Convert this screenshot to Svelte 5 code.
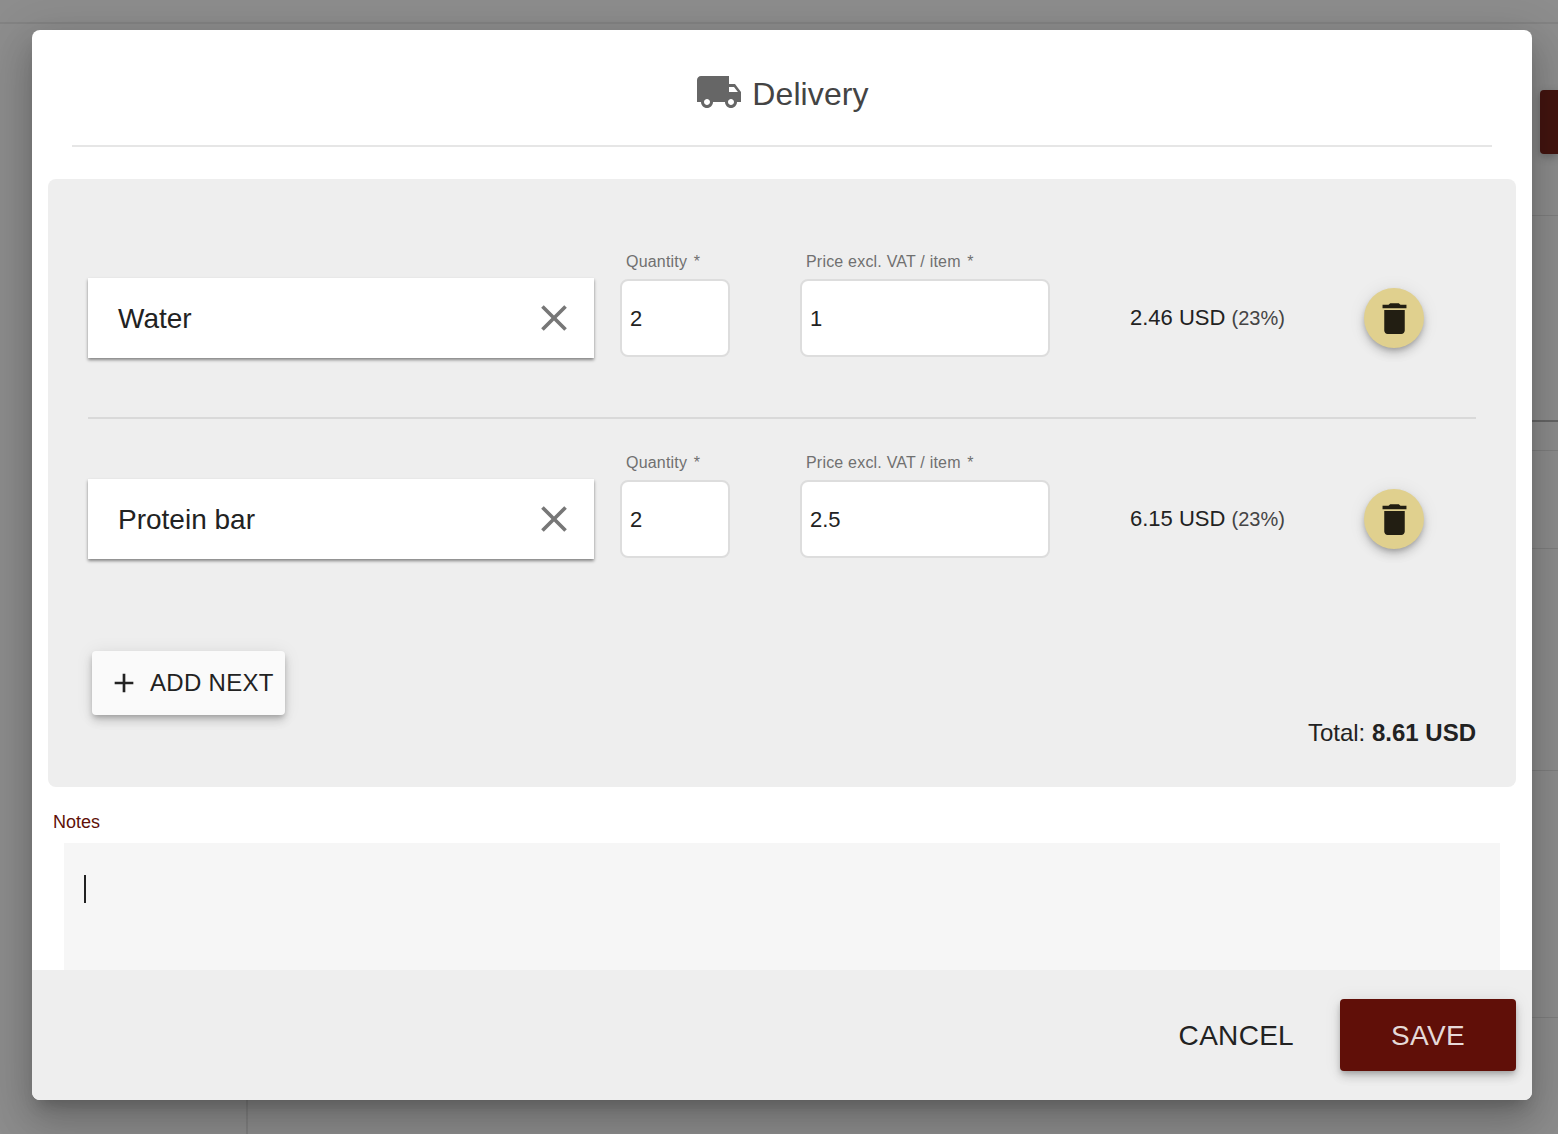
<!--
  Delivery dialog over a dimmed page
-->
<script>
  const items = [
    { name: 'Water', quantity: '2', price: '1', gross: '2.46 USD' },
    { name: 'Protein bar', quantity: '2', price: '2.5', gross: '6.15 USD' }
  ];
</script>

<div class="page">
  <div class="page-topbar"></div>
  <div class="page-action"></div>
  <div class="page-rule r1"></div>
  <div class="page-rule r2"></div>
  <div class="page-rule r3"></div>
  <div class="page-rule r4"></div>
  <div class="page-rule r5"></div>
  <div class="page-rule r6"></div>
  <div class="page-sidebar"></div>
</div>

<div class="dialog">
  <header class="dialog-header">
    <svg class="truck" viewBox="0 0 24 24" aria-hidden="true">
      <path d="M20 8h-3V4H3c-1.1 0-2 .9-2 2v11h2c0 1.66 1.34 3 3 3s3-1.34 3-3h6c0 1.66 1.34 3 3 3s3-1.34 3-3h2v-5l-3-4zM6 18.5c-.83 0-1.5-.67-1.5-1.5s.67-1.5 1.5-1.5 1.5.67 1.5 1.5-.67 1.5-1.5 1.5zm13.5-9l1.96 2.5H17V9.5h2.5zm-1.5 9c-.83 0-1.5-.67-1.5-1.5s.67-1.5 1.5-1.5 1.5.67 1.5 1.5-.67 1.5-1.5 1.5z" />
    </svg>
    <h2>Delivery</h2>
  </header>

  <div class="dialog-body">
    <section class="items">
      {#each items as item, i}
        {#if i > 0}
          <div class="divider"></div>
        {/if}
        <div class="item-row">
          <div class="product">
            <span class="product-name">{item.name}</span>
            <svg class="clear" viewBox="0 0 24 24" aria-hidden="true">
              <path d="M19 6.41L17.59 5 12 10.59 6.41 5 5 6.41 10.59 12 5 17.59 6.41 19 12 13.41 17.59 19 19 17.59 13.41 12z" />
            </svg>
          </div>
          <label class="field qty">
            <span class="field-label">Quantity <span class="req">*</span></span>
            <input value={item.quantity} />
          </label>
          <label class="field price">
            <span class="field-label">Price excl. VAT / item <span class="req">*</span></span>
            <input value={item.price} />
          </label>
          <div class="amount">{item.gross} <small>(23%)</small></div>
          <button class="delete" aria-label="Delete">
            <svg viewBox="0 0 24 24" aria-hidden="true">
              <path d="M6 19c0 1.1.9 2 2 2h8c1.1 0 2-.9 2-2V7H6v12zM19 4h-3.5l-1-1h-5l-1 1H5v2h14V4z" />
            </svg>
          </button>
        </div>
      {/each}

      <div class="items-footer">
        <button class="add">
          <svg viewBox="0 0 24 24" aria-hidden="true"><path d="M19 13h-6v6h-2v-6H5v-2h6V5h2v6h6v2z" /></svg>
          ADD NEXT
        </button>
        <div class="total">Total: <strong>8.61 USD</strong></div>
      </div>
    </section>

    <div class="notes-label">Notes</div>
    <div class="notes"><span class="caret"></span></div>
  </div>

  <footer class="dialog-footer">
    <button class="cancel">CANCEL</button>
    <button class="save">SAVE</button>
  </footer>
</div>

<style>
  :global(body) {
    margin: 0;
    background: #8c8c8c;
    font-family: "Liberation Sans", Arial, sans-serif;
    overflow: hidden;
  }

  .page {
    position: fixed;
    inset: 0;
    background: #8d8d8d;
  }

  .page-topbar {
    position: absolute;
    top: 22px;
    left: 0;
    right: 0;
    height: 2px;
    background: #838383;
  }

  .page-action {
    position: absolute;
    top: 90px;
    right: 0;
    width: 18px;
    height: 64px;
    background: #43140f;
    border-radius: 4px 0 0 4px;
    box-shadow: 0 3px 8px rgba(0, 0, 0, 0.25);
  }

  .page-rule {
    position: absolute;
    left: 1532px;
    right: 0;
    height: 1px;
    background: #7f7f7f;
  }

  .r1 { top: 215px; }
  .r2 { top: 420px; height: 2px; background: #666; }
  .r3 { top: 450px; }
  .r4 { top: 548px; }
  .r5 { top: 770px; }
  .r6 { top: 1017px; }

  .page-sidebar {
    position: absolute;
    left: 246px;
    top: 1100px;
    bottom: 0;
    width: 2px;
    background: rgba(0, 0, 0, 0.08);
  }

  .dialog {
    position: fixed;
    left: 32px;
    top: 30px;
    width: 1500px;
    height: 1070px;
    display: flex;
    flex-direction: column;
    background: #fff;
    border-radius: 8px;
    overflow: hidden;
    box-shadow: 0 11px 15px -7px rgba(0, 0, 0, 0.2), 0 24px 38px 3px rgba(0, 0, 0, 0.14), 0 9px 46px 8px rgba(0, 0, 0, 0.12);
  }

  .dialog-header {
    flex: none;
    height: 101px;
    margin: 0 40px;
    padding: 14px 0 0;
    display: flex;
    align-items: center;
    justify-content: center;
    gap: 9px;
    border-bottom: 2px solid #e6e6e6;
  }

  .truck {
    width: 48px;
    height: 48px;
    margin-bottom: 5px;
    fill: #666;
  }

  .dialog-header h2 {
    margin: 0;
    font-size: 32px;
    font-weight: 400;
    letter-spacing: 0.1px;
    color: #444;
  }

  .dialog-body {
    flex: 1;
    min-height: 0;
    overflow: hidden;
    padding: 32px 16px 0;
  }

  .items {
    background: #eee;
    border-radius: 8px;
    padding: 39px 40px 40px;
  }

  .item-row {
    height: 200px;
    display: flex;
    align-items: center;
  }

  .divider {
    height: 2px;
    margin-top: -1px;
    background: #d9d9d9;
  }

  .product {
    width: 506px;
    height: 80px;
    box-sizing: border-box;
    padding: 0 18px 0 30px;
    display: flex;
    align-items: center;
    justify-content: space-between;
    background: #fff;
    box-shadow: 0 2px 3px rgba(0, 0, 0, 0.45);
    font-size: 28px;
    color: #222;
  }

  .product-name {
    padding-top: 2px;
  }

  .clear {
    width: 44px;
    height: 44px;
    fill: #777;
  }

  .field {
    position: relative;
    display: block;
  }

  .qty {
    width: 110px;
    margin-left: 26px;
  }

  .price {
    width: 250px;
    margin-left: 70px;
  }

  .field-label {
    position: absolute;
    left: 6px;
    top: -27px;
    font-size: 16px;
    line-height: 20px;
    letter-spacing: 0.2px;
    color: #707070;
    white-space: nowrap;
  }

  .req {
    margin-left: 2px;
  }

  .field input {
    display: block;
    width: 100%;
    height: 78px;
    box-sizing: border-box;
    padding: 2px 8px 0;
    border: 2px solid #ddd;
    border-radius: 8px;
    background: #fff;
    font: 22px "Liberation Sans", Arial, sans-serif;
    color: #222;
    outline: none;
  }

  .amount {
    width: 234px;
    margin-left: 80px;
    font-size: 22px;
    color: #222;
    white-space: nowrap;
  }

  .amount small {
    font-size: 20px;
    color: #444;
  }

  .delete {
    width: 60px;
    height: 60px;
    padding: 0;
    border: none;
    border-radius: 50%;
    background: #e0d08e;
    display: flex;
    align-items: center;
    justify-content: center;
    box-shadow: 0 3px 5px -1px rgba(0, 0, 0, 0.2), 0 6px 10px 0 rgba(0, 0, 0, 0.14), 0 1px 18px 0 rgba(0, 0, 0, 0.08);
  }

  .delete svg {
    width: 41px;
    height: 41px;
    fill: #221e12;
  }

  .items-footer {
    margin-top: 32px;
    display: flex;
    justify-content: space-between;
    align-items: flex-end;
    height: 96px;
  }

  .add {
    align-self: flex-start;
    width: 193px;
    height: 64px;
    margin-left: 4px;
    padding: 0 0 0 16px;
    display: flex;
    align-items: center;
    gap: 10px;
    border: none;
    border-radius: 4px;
    background: #fafafa;
    font: 24px "Liberation Sans", Arial, sans-serif;
    letter-spacing: 0.3px;
    color: #222;
    white-space: nowrap;
    box-shadow: 0 3px 5px -1px rgba(0, 0, 0, 0.2), 0 6px 10px 0 rgba(0, 0, 0, 0.14), 0 1px 18px 0 rgba(0, 0, 0, 0.08);
  }

  .add svg {
    width: 32px;
    height: 32px;
    fill: #222;
  }

  .total {
    font-size: 24px;
    line-height: 28px;
    color: #222;
  }

  .notes-label {
    margin: 25px 0 11px 5px;
    font-size: 18px;
    line-height: 20px;
    color: #601008;
  }

  .notes {
    height: 200px;
    margin: 0 16px;
    padding: 32px 20px;
    box-sizing: border-box;
    background: #f6f6f6;
  }

  .caret {
    display: block;
    width: 2px;
    height: 28px;
    background: #222;
  }

  .dialog-footer {
    flex: none;
    height: 130px;
    box-sizing: border-box;
    padding: 29px 16px 0 0;
    display: flex;
    justify-content: flex-end;
    align-items: flex-start;
    background: #eee;
  }

  .dialog-footer button {
    height: 72px;
    padding-top: 2px;
    border: none;
    font: 28px "Liberation Sans", Arial, sans-serif;
    letter-spacing: 0.3px;
  }

  .cancel {
    margin-right: 30px;
    padding: 2px 16px 0;
    background: transparent;
    color: #222;
  }

  .save {
    width: 176px;
    border-radius: 4px;
    background: #600f08;
    color: rgba(255, 255, 255, 0.85);
    box-shadow: 0 3px 5px -1px rgba(0, 0, 0, 0.2), 0 6px 10px 0 rgba(0, 0, 0, 0.14), 0 1px 18px 0 rgba(0, 0, 0, 0.08);
  }
</style>
